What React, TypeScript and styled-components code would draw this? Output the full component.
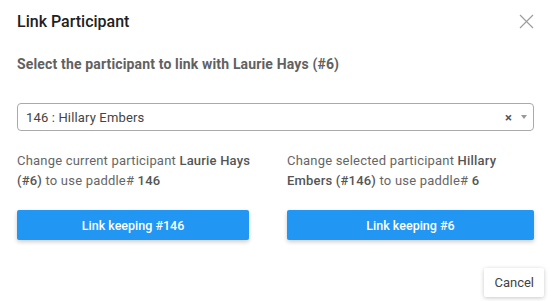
import React from "react";
import styled, { createGlobalStyle } from "styled-components";

const GlobalStyle = createGlobalStyle`
  html, body {
    margin: 0;
    padding: 0;
    background: #fff;
    font-family: Roboto, "Liberation Sans", sans-serif;
  }
`;

const Dialog = styled.div`
  width: 551px;
  height: 301px;
  box-sizing: border-box;
  padding: 0 17px;
  display: flex;
  flex-direction: column;
  background: #fff;
`;

const Header = styled.div`
  display: flex;
  align-items: center;
  justify-content: space-between;
  height: 42px;
`;

const Title = styled.h2`
  margin: 0;
  font-size: 16px;
  font-weight: 500;
  color: #212121;
`;

const CloseButton = styled.button`
  border: none;
  background: none;
  padding: 0;
  width: 15px;
  height: 15px;
  display: flex;
  cursor: pointer;
`;

const Subtitle = styled.p`
  margin: 12px 0 0;
  font-size: 14px;
  font-weight: 700;
  letter-spacing: 0.15px;
  color: #616161;
  line-height: 20px;
`;

const SelectBox = styled.div`
  margin-top: 29px;
  height: 28px;
  box-sizing: border-box;
  border: 1px solid #aaa;
  border-radius: 4px;
  display: flex;
  align-items: center;
  padding: 0 6px 0 8px;
  font-size: 13px;
  letter-spacing: 0.15px;
  color: #444;
`;

const SelectValue = styled.span`
  flex: 1;
`;

const ClearMark = styled.span`
  font-size: 13px;
  font-weight: 700;
  color: #555;
  margin-right: 9px;
`;

const Arrow = styled.span`
  width: 0;
  height: 0;
  border-left: 3px solid transparent;
  border-right: 3px solid transparent;
  border-top: 4px solid #999;
`;

const Columns = styled.div`
  margin-top: 20px;
  display: grid;
  grid-template-columns: 232px 1fr;
  column-gap: 38px;
`;

const Column = styled.div`
  display: flex;
  flex-direction: column;
`;

const Description = styled.p`
  margin: 0 -10px 0 0;
  height: 42px;
  font-size: 13px;
  line-height: 20px;
  letter-spacing: 0.2px;
  color: #666;

  b {
    font-weight: 500;
    color: #555;
  }
`;

const LinkButton = styled.button`
  margin-top: 17px;
  height: 30px;
  border: none;
  border-radius: 2px;
  background: #2196f3;
  color: #fff;
  font-family: inherit;
  font-size: 12.5px;
  font-weight: 500;
  box-shadow: 0 2px 4px rgba(0, 0, 0, 0.2);
  cursor: pointer;
`;

const Footer = styled.div`
  margin-top: auto;
  margin-right: -10px;
  margin-bottom: 4px;
  display: flex;
  justify-content: flex-end;
`;

const CancelButton = styled.button`
  height: 29px;
  padding: 0 10px;
  border: none;
  border-radius: 2px;
  background: #fff;
  color: #424242;
  font-family: inherit;
  font-size: 13px;
  box-shadow: 0 1px 4px rgba(0, 0, 0, 0.22);
  cursor: pointer;
`;

const options = [
	{
		text: (
			<>
				Change current participant <b>Laurie Hays (#6)</b> to use paddle#{" "}
				<b>146</b>
			</>
		),
		label: "Link keeping #146",
	},
	{
		text: (
			<>
				Change selected participant <b>Hillary Embers (#146)</b> to use
				paddle# <b>6</b>
			</>
		),
		label: "Link keeping #6",
	},
];

const App: React.FC = () => {
	return (
		<>
			<GlobalStyle />
			<Dialog>
				<Header>
					<Title>Link Participant</Title>
					<CloseButton aria-label="close">
						<svg width="15" height="15" viewBox="0 0 15 15">
							<path
								d="M1 1L14 14M14 1L1 14"
								stroke="#9e9e9e"
								strokeWidth="1.2"
								fill="none"
							/>
						</svg>
					</CloseButton>
				</Header>
				<Subtitle>Select the participant to link with Laurie Hays (#6)</Subtitle>
				<SelectBox>
					<SelectValue>146 : Hillary Embers</SelectValue>
					<ClearMark>×</ClearMark>
					<Arrow />
				</SelectBox>
				<Columns>
					{options.map((o) => (
						<Column key={o.label}>
							<Description>{o.text}</Description>
							<LinkButton>{o.label}</LinkButton>
						</Column>
					))}
				</Columns>
				<Footer>
					<CancelButton>Cancel</CancelButton>
				</Footer>
			</Dialog>
		</>
	);
};

export default App;
